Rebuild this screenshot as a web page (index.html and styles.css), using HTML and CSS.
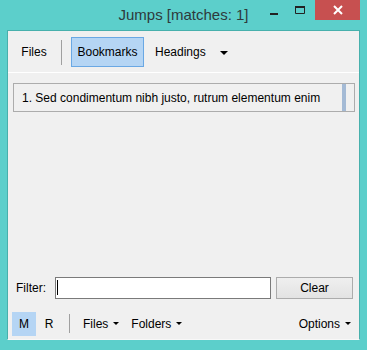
FILE: index.html
```html
<!DOCTYPE html>
<html lang="en">
<head>
    <meta charset="UTF-8">
    <title>Jumps [matches: 1]</title>
    <link rel="stylesheet" href="styles.css">
</head>
<body>
    <div class="window">
        <div class="titlebar">
            <div class="title">Jumps [matches: 1]</div>
            <div class="caption-buttons">
                <div class="cap-btn minimize">
                    <svg width="8" height="2" viewBox="0 0 8 2"><rect width="8" height="2" fill="#222"/></svg>
                </div>
                <div class="cap-btn maximize">
                    <svg width="10" height="8" viewBox="0 0 10 8">
                        <path d="M0.5 1 H9.5 V7.5 H0.5 Z" fill="none" stroke="#222" stroke-width="1"/>
                        <rect x="0" y="0" width="10" height="2" fill="#222"/>
                    </svg>
                </div>
                <div class="cap-btn close">
                    <svg width="10" height="10" viewBox="0 0 10 10">
                        <path d="M1 1 L9 9 M9 1 L1 9" stroke="#fff" stroke-width="2"/>
                    </svg>
                </div>
            </div>
        </div>
        <div class="client">
            <div class="toolbar">
                <div class="tb-btn files-top">Files</div>
                <div class="tb-sep"></div>
                <div class="tb-btn checked bookmarks">Bookmarks</div>
                <div class="tb-btn headings">Headings <span class="arrow"></span></div>
            </div>
            <div class="list-wrap">
                <div class="list-item">
                    <span class="item-text">1. Sed condimentum nibh justo, rutrum elementum enim</span>
                    <span class="item-bar"></span>
                </div>
            </div>
            <div class="spacer"></div>
            <div class="filter-row">
                <span class="filter-label">Filter:</span>
                <div class="filter-input"><span class="caret"></span></div>
                <div class="clear-btn">Clear</div>
            </div>
            <div class="bottombar">
                <div class="bb-btn checked mode-m">M</div>
                <div class="bb-btn mode-r">R</div>
                <div class="bb-sep"></div>
                <div class="bb-btn drop files-bottom">Files <span class="arrow small"></span></div>
                <div class="bb-btn drop folders">Folders <span class="arrow small"></span></div>
                <div class="bb-fill"></div>
                <div class="bb-btn drop options">Options <span class="arrow small"></span></div>
            </div>
        </div>
    </div>
</body>
</html>
```

FILE: styles.css
```css
* {
    box-sizing: border-box;
}
body {
    margin: 0;
    font-family: "Liberation Sans", Arial, sans-serif;
    font-size: 12px;
    color: #000;
}
.window {
    width: 367px;
    height: 350px;
    background: #5ccfcb;
    overflow: hidden;
}
.titlebar {
    height: 30px;
    position: relative;
}
.title {
    text-align: center;
    font-size: 15px;
    line-height: 30px;
    color: #2e3a3c;
}
.caption-buttons {
    position: absolute;
    top: 0;
    right: 7px;
    display: flex;
}
.cap-btn {
    height: 20px;
    display: flex;
    align-items: center;
    justify-content: center;
    flex-shrink: 0;
}
.minimize {
    width: 26px;
    padding-top: 7px;
}
.maximize {
    width: 26px;
    margin-right: 2px;
    padding-bottom: 1px;
}
.close {
    width: 45px;
    background: #c75050;
}
.client {
    margin: 0 7px;
    height: 310px;
    background: #f0f0f0;
    border: 1px solid #47b0ac;
    border-bottom: 1px solid #f8f8f8;
    display: flex;
    flex-direction: column;
}
.toolbar {
    height: 42px;
    border-bottom: 1px solid #fff;
    display: flex;
    align-items: center;
    padding-left: 6px;
    padding-top: 1px;
}
.tb-btn {
    height: 30px;
    display: flex;
    align-items: center;
    justify-content: center;
    border: 1px solid transparent;
}
.files-top {
    width: 40px;
}
.tb-sep {
    width: 1px;
    height: 25px;
    background: #a0a0a0;
    margin: 0 9px 0 7px;
}
.checked {
    background: #b5d5f4;
    border-color: #6aa8e4;
}
.bookmarks {
    width: 73px;
}
.headings {
    margin-left: 10px;
}
.arrow {
    width: 0;
    height: 0;
    border-left: 4px solid transparent;
    border-right: 4px solid transparent;
    border-top: 4px solid #000;
    margin-left: 14px;
    margin-top: 1px;
}
.arrow.small {
    border-left-width: 3px;
    border-right-width: 3px;
    border-top-width: 3px;
    margin-left: 5px;
    margin-top: -1px;
}
.list-wrap {
    padding: 10px 4px 0 5px;
}
.list-item {
    height: 29px;
    border: 1px solid #acacac;
    display: flex;
    align-items: center;
    padding-left: 8px;
}
.item-text {
    flex: 1;
    padding-top: 1px;
}
.item-bar {
    width: 4px;
    align-self: stretch;
    background: #a4bad5;
    margin-right: 8px;
}
.spacer {
    flex: 1;
}
.filter-row {
    height: 22px;
    display: flex;
    align-items: center;
    padding-left: 8px;
    margin-bottom: 11px;
}
.filter-label {
    width: 39px;
}
.filter-input {
    width: 216px;
    height: 22px;
    background: #fff;
    border: 1px solid #7a7a7a;
    padding: 2px 0 0 1px;
}
.caret {
    display: block;
    width: 1px;
    height: 15px;
    background: #000;
}
.clear-btn {
    width: 77px;
    height: 22px;
    margin-left: 5px;
    border: 1px solid #acacac;
    background: linear-gradient(#efefef, #e3e3e3);
    display: flex;
    align-items: center;
    justify-content: center;
}
.bottombar {
    height: 29px;
    display: flex;
    align-items: center;
    padding: 0 7px 2px 4px;
}
.bb-btn {
    height: 24px;
    display: flex;
    align-items: center;
    justify-content: center;
    border: 1px solid transparent;
}
.mode-m {
    width: 24px;
}
.mode-r {
    width: 24px;
    margin-left: 1px;
}
.bb-sep {
    width: 1px;
    height: 19px;
    background: #a0a0a0;
    margin: 0 7px 0 8px;
}
.files-bottom {
    margin-left: 5px;
}
.folders {
    margin-left: 10px;
}
.bb-fill {
    flex: 1;
}
```
